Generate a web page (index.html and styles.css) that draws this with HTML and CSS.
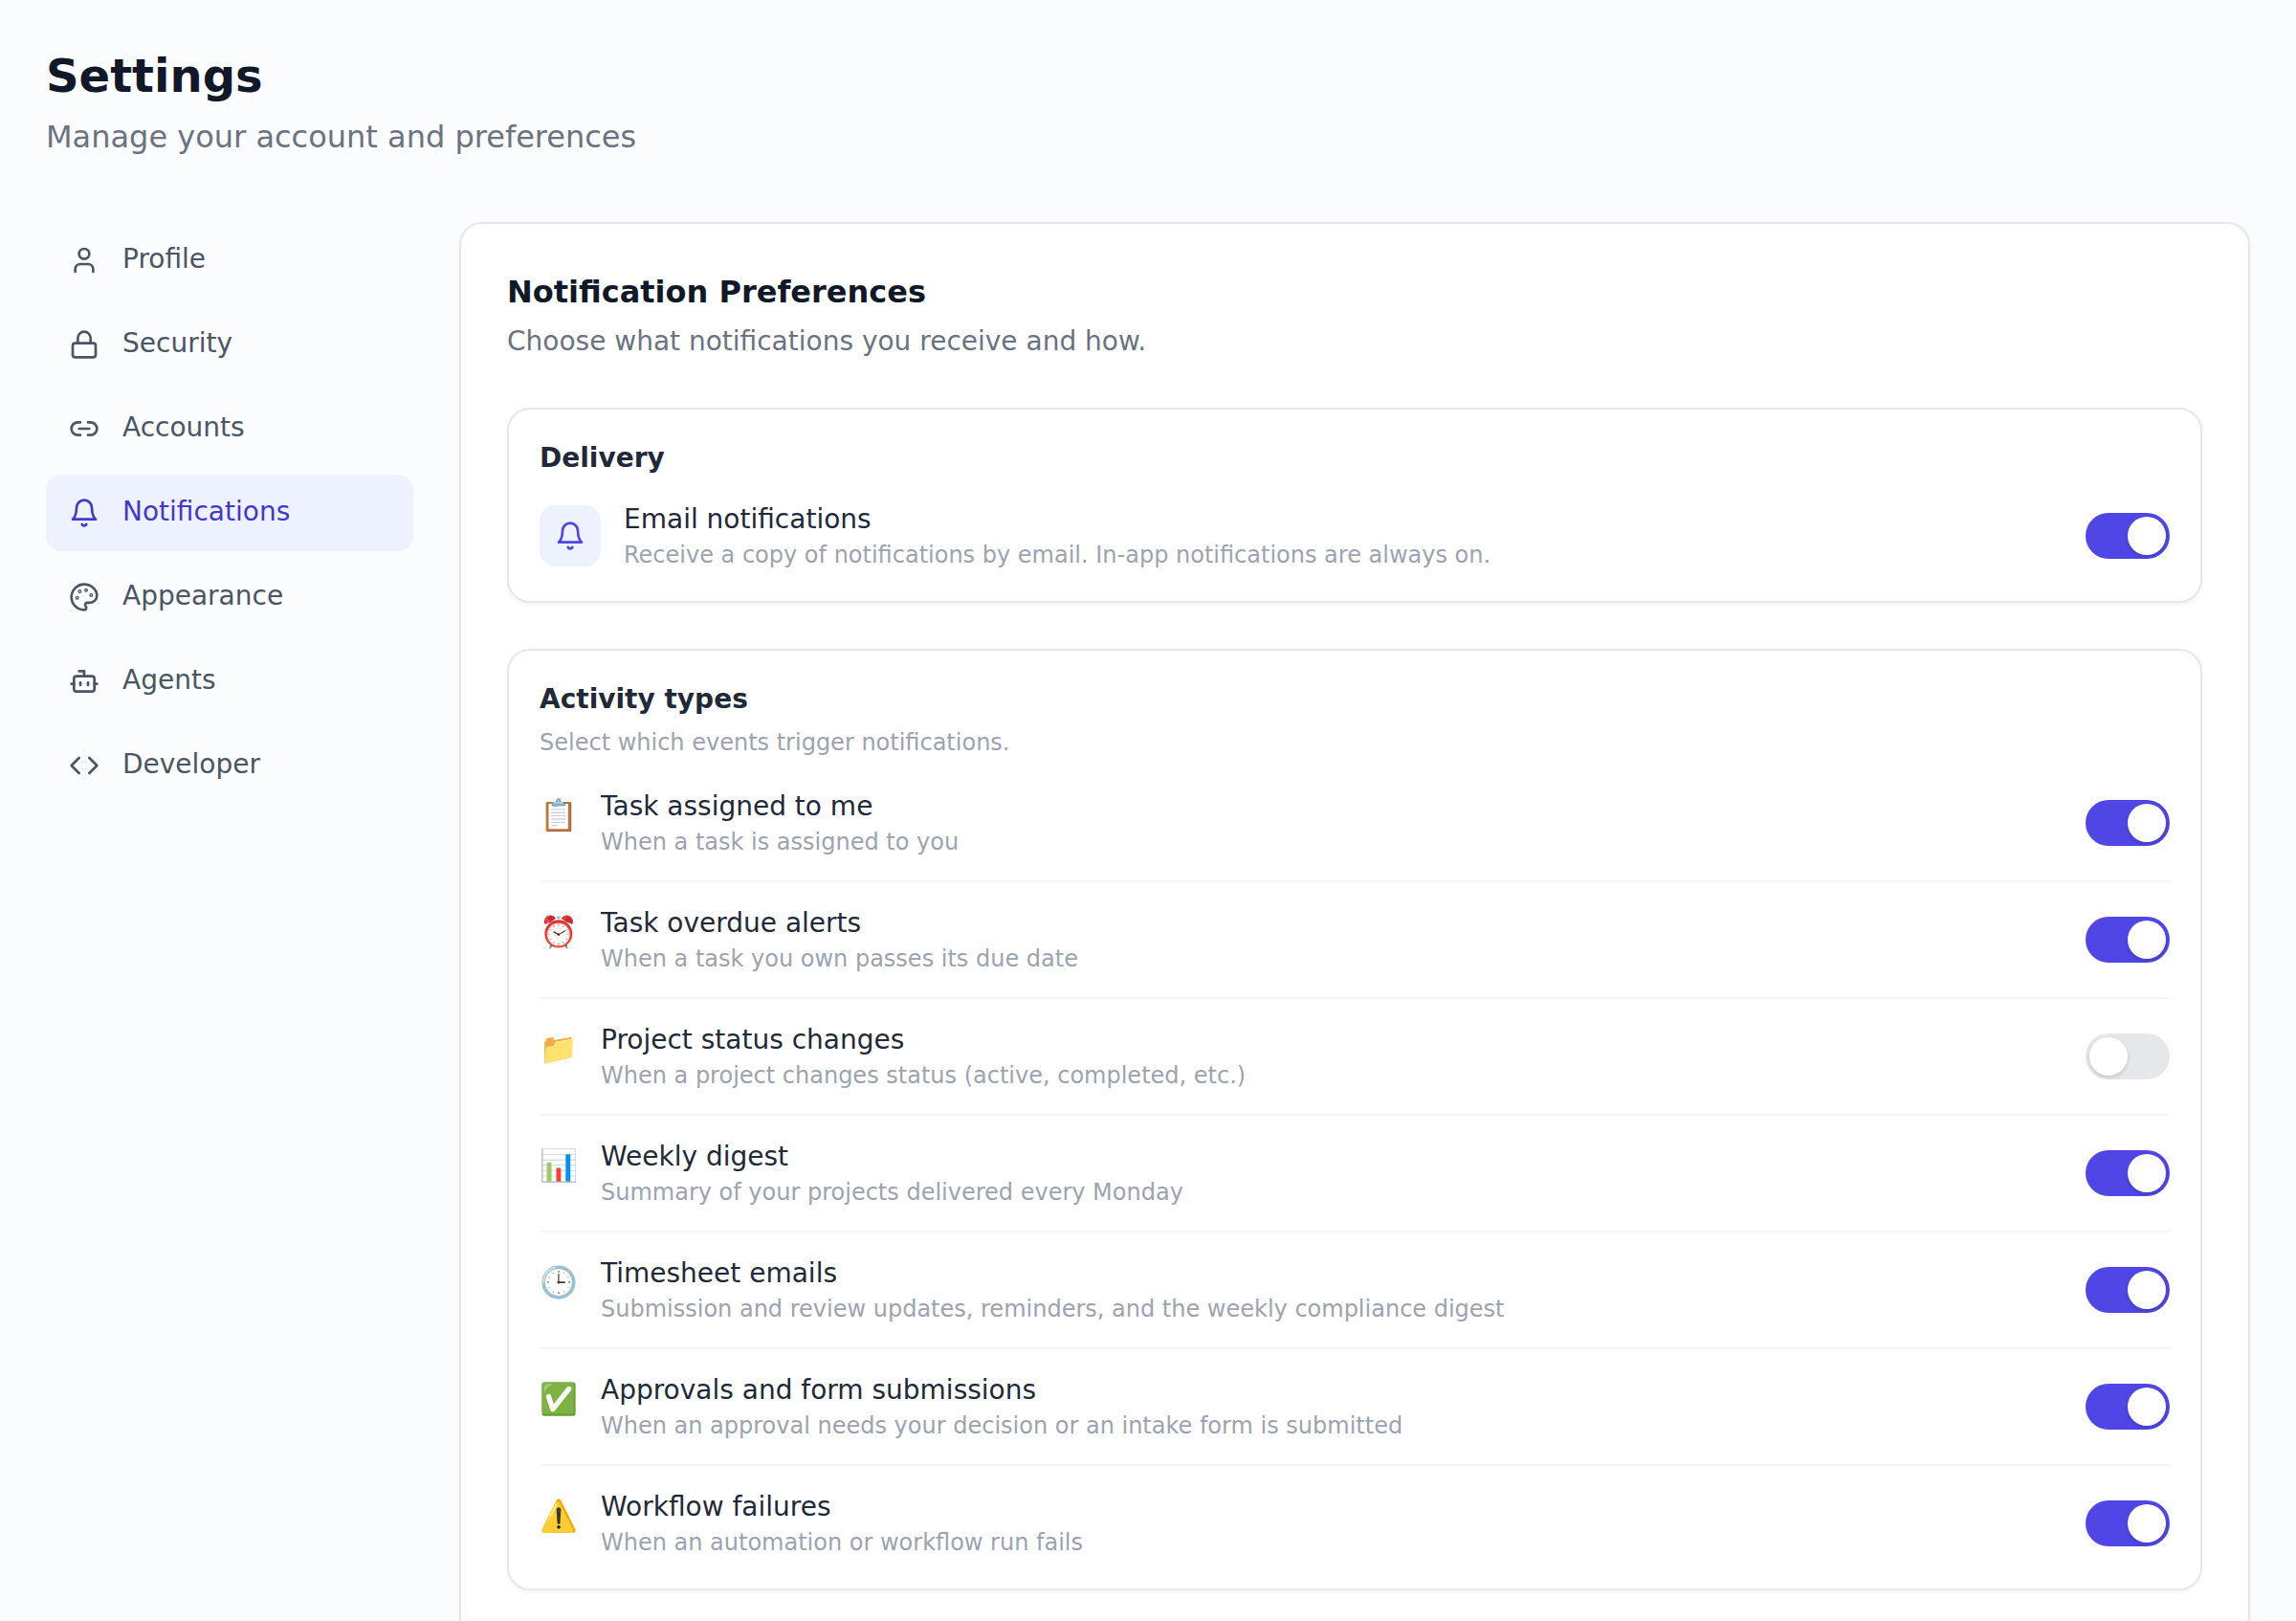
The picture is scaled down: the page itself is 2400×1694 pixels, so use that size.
FILE: index.html
```html
<!DOCTYPE html>
<html lang="en">
<head>
  <meta charset="UTF-8">
  <meta name="viewport" content="width=device-width, initial-scale=1.0">
  <title>Settings</title>
  <link rel="stylesheet" href="styles.css">
</head>
<body>
  <header class="page-header">
    <h1>Settings</h1>
    <p>Manage your account and preferences</p>
  </header>

  <div class="layout">
    <nav class="sidebar">
      <a class="nav-item">
        <svg class="icon" viewBox="0 0 24 24"><path d="M19 21v-2a4 4 0 0 0-4-4H9a4 4 0 0 0-4 4v2"/><circle cx="12" cy="7" r="4"/></svg>
        <span>Profile</span>
      </a>
      <a class="nav-item">
        <svg class="icon" viewBox="0 0 24 24"><rect x="3" y="11" width="18" height="11" rx="2"/><path d="M7 11V7a5 5 0 0 1 10 0v4"/></svg>
        <span>Security</span>
      </a>
      <a class="nav-item">
        <svg class="icon" viewBox="0 0 24 24"><path d="M9 17H7A5 5 0 0 1 7 7h2"/><path d="M15 7h2a5 5 0 1 1 0 10h-2"/><path d="M8 12h8"/></svg>
        <span>Accounts</span>
      </a>
      <a class="nav-item active">
        <svg class="icon" viewBox="0 0 24 24"><path d="M6 8a6 6 0 0 1 12 0c0 7 3 9 3 9H3s3-2 3-9"/><path d="M10.3 21a1.94 1.94 0 0 0 3.4 0"/></svg>
        <span>Notifications</span>
      </a>
      <a class="nav-item">
        <svg class="icon" viewBox="0 0 24 24"><circle cx="13.5" cy="6.5" r=".5"/><circle cx="17.5" cy="10.5" r=".5"/><circle cx="8.5" cy="7.5" r=".5"/><circle cx="6.5" cy="12.5" r=".5"/><path d="M12 2C6.5 2 2 6.5 2 12s4.5 10 10 10c.926 0 1.648-.746 1.648-1.688 0-.437-.18-.835-.437-1.125-.29-.289-.438-.652-.438-1.125a1.64 1.64 0 0 1 1.668-1.668h1.996c3.051 0 5.555-2.503 5.555-5.554C21.965 6.012 17.461 2 12 2z"/></svg>
        <span>Appearance</span>
      </a>
      <a class="nav-item">
        <svg class="icon" viewBox="0 0 24 24"><path d="M12 8V4H8"/><rect x="4" y="8" width="16" height="12" rx="2"/><path d="M2 14h2M20 14h2M15 13v2M9 13v2"/></svg>
        <span>Agents</span>
      </a>
      <a class="nav-item">
        <svg class="icon" viewBox="0 0 24 24"><path d="m16 18 6-6-6-6"/><path d="m8 6-6 6 6 6"/></svg>
        <span>Developer</span>
      </a>
    </nav>

    <main class="panel">
      <h2>Notification Preferences</h2>
      <p class="panel-text">Choose what notifications you receive and how.</p>

      <section class="card">
        <h3>Delivery</h3>
        <div class="delivery-row">
          <div class="icon-box">
            <svg class="icon" viewBox="0 0 24 24"><path d="M6 8a6 6 0 0 1 12 0c0 7 3 9 3 9H3s3-2 3-9"/><path d="M10.3 21a1.94 1.94 0 0 0 3.4 0"/></svg>
          </div>
          <div class="row-text">
            <div class="row-title">Email notifications</div>
            <div class="row-desc">Receive a copy of notifications by email. In-app notifications are always on.</div>
          </div>
          <span class="toggle on"></span>
        </div>
      </section>

      <section class="card">
        <h3>Activity types</h3>
        <p class="card-text">Select which events trigger notifications.</p>
        <ul class="activity-list">
          <li>
            <span class="emoji">📋</span>
            <div class="row-text">
              <div class="row-title">Task assigned to me</div>
              <div class="row-desc">When a task is assigned to you</div>
            </div>
            <span class="toggle on"></span>
          </li>
          <li>
            <span class="emoji">⏰</span>
            <div class="row-text">
              <div class="row-title">Task overdue alerts</div>
              <div class="row-desc">When a task you own passes its due date</div>
            </div>
            <span class="toggle on"></span>
          </li>
          <li>
            <span class="emoji">📁</span>
            <div class="row-text">
              <div class="row-title">Project status changes</div>
              <div class="row-desc">When a project changes status (active, completed, etc.)</div>
            </div>
            <span class="toggle"></span>
          </li>
          <li>
            <span class="emoji">📊</span>
            <div class="row-text">
              <div class="row-title">Weekly digest</div>
              <div class="row-desc">Summary of your projects delivered every Monday</div>
            </div>
            <span class="toggle on"></span>
          </li>
          <li>
            <span class="emoji">🕒</span>
            <div class="row-text">
              <div class="row-title">Timesheet emails</div>
              <div class="row-desc">Submission and review updates, reminders, and the weekly compliance digest</div>
            </div>
            <span class="toggle on"></span>
          </li>
          <li>
            <span class="emoji">✅</span>
            <div class="row-text">
              <div class="row-title">Approvals and form submissions</div>
              <div class="row-desc">When an approval needs your decision or an intake form is submitted</div>
            </div>
            <span class="toggle on"></span>
          </li>
          <li>
            <span class="emoji">⚠️</span>
            <div class="row-text">
              <div class="row-title">Workflow failures</div>
              <div class="row-desc">When an automation or workflow run fails</div>
            </div>
            <span class="toggle on"></span>
          </li>
        </ul>
      </section>
    </main>
  </div>
</body>
</html>
```
FILE: styles.css
```css
:root {
  --primary: #4f46e5;
  --primary-dark: #4338ca;
  --primary-light: #eef2ff;
  --border: #e5e7eb;
  --divider: #f3f4f6;
  --text: #111827;
  --text-dark: #1f2937;
  --text-nav: #4b5563;
  --text-muted: #6b7280;
  --text-light: #9ca3af;
}

* {
  box-sizing: border-box;
  margin: 0;
  padding: 0;
}

body {
  font-family: 'DejaVu Sans', sans-serif;
  font-size: 28px;
  line-height: 38px;
  background-color: #fafcfe;
  color: var(--text);
  height: 1694px;
  overflow: hidden;
  padding: 48px;
}

.page-header {
  margin-bottom: 64px;
}

h1 {
  font-size: 48px;
  line-height: 62px;
  padding-bottom: 2px;
}

.page-header p {
  margin-top: 8px;
  padding-bottom: 2px;
  font-size: 32px;
  line-height: 46px;
  color: var(--text-muted);
}

.layout {
  display: flex;
  align-items: flex-start;
  gap: 48px;
}

.sidebar {
  display: flex;
  flex-direction: column;
  gap: 8px;
  width: 384px;
  flex-shrink: 0;
}

.nav-item {
  display: flex;
  align-items: center;
  gap: 24px;
  padding: 20px 24px;
  border-radius: 16px;
  color: var(--text-nav);
}

.nav-item span {
  padding-bottom: 2px;
}

.nav-item.active {
  background-color: var(--primary-light);
  color: var(--primary-dark);
}

.icon {
  width: 32px;
  height: 32px;
  flex-shrink: 0;
  fill: none;
  stroke: currentColor;
  stroke-width: 2;
  stroke-linecap: round;
  stroke-linejoin: round;
}

.panel {
  flex: 1;
  min-width: 0;
  padding: 48px;
  background-color: white;
  border: 2px solid var(--border);
  border-radius: 24px;
  box-shadow: 0 2px 4px rgba(0, 0, 0, 0.05);
}

h2 {
  font-size: 32px;
  line-height: 46px;
  padding-bottom: 2px;
}

.panel-text {
  margin-top: 8px;
  padding-bottom: 2px;
  color: var(--text-muted);
}

.card {
  margin-top: 48px;
  padding: 32px;
  border: 2px solid var(--border);
  border-radius: 24px;
  background-color: white;
  box-shadow: 0 2px 4px rgba(0, 0, 0, 0.05);
}

h3 {
  font-size: 28px;
  padding-bottom: 2px;
  color: var(--text-dark);
}

.card-text {
  margin-top: 8px;
  font-size: 24px;
  line-height: 32px;
  color: var(--text-light);
}

.delivery-row {
  display: flex;
  align-items: center;
  gap: 24px;
  margin-top: 24px;
}

.icon-box {
  display: flex;
  align-items: center;
  justify-content: center;
  width: 64px;
  height: 64px;
  border-radius: 16px;
  background-color: var(--primary-light);
  color: var(--primary);
}

.row-text {
  flex: 1;
}

.row-title {
  padding-bottom: 2px;
  color: var(--text-dark);
}

.row-desc {
  font-size: 24px;
  line-height: 32px;
  color: var(--text-light);
}

.activity-list {
  list-style: none;
  margin-top: 8px;
}

.activity-list li {
  display: flex;
  align-items: center;
  gap: 24px;
  padding: 24px 0;
  border-bottom: 2px solid var(--divider);
}

.activity-list li:last-child {
  padding-bottom: 0;
  border-bottom: none;
}

.emoji {
  align-self: flex-start;
  width: 40px;
  margin-top: 4px;
  font-size: 32px;
  line-height: 48px;
}

.toggle {
  display: flex;
  width: 88px;
  height: 48px;
  padding: 4px;
  border-radius: 24px;
  background-color: var(--border);
}

.toggle::before {
  content: '';
  width: 40px;
  height: 40px;
  border-radius: 50%;
  background-color: white;
  box-shadow: 0 2px 4px rgba(0, 0, 0, 0.15);
}

.toggle.on {
  justify-content: flex-end;
  background-color: var(--primary);
}
```
